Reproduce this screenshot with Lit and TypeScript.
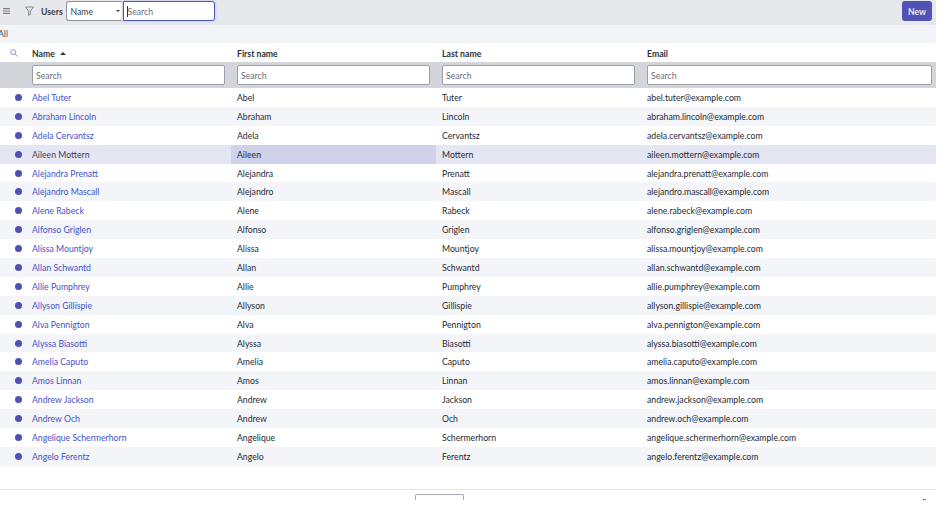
import { LitElement, html, css } from 'lit';
import { customElement } from 'lit/decorators.js';

const users = [
  ['Abel', 'Tuter'],
  ['Abraham', 'Lincoln'],
  ['Adela', 'Cervantsz'],
  ['Aileen', 'Mottern'],
  ['Alejandra', 'Prenatt'],
  ['Alejandro', 'Mascall'],
  ['Alene', 'Rabeck'],
  ['Alfonso', 'Griglen'],
  ['Alissa', 'Mountjoy'],
  ['Allan', 'Schwantd'],
  ['Allie', 'Pumphrey'],
  ['Allyson', 'Gillispie'],
  ['Alva', 'Pennigton'],
  ['Alyssa', 'Biasotti'],
  ['Amelia', 'Caputo'],
  ['Amos', 'Linnan'],
  ['Andrew', 'Jackson'],
  ['Andrew', 'Och'],
  ['Angelique', 'Schermerhorn'],
  ['Angelo', 'Ferentz'],
];

@customElement('app-root')
export class AppRoot extends LitElement {
  static styles = css`
    :host {
      display: block;
      width: 946px;
      height: 514px;
      overflow: hidden;
      background: #fff;
      font-family: 'Lato', sans-serif;
      font-size: 8.7px;
      color: #1f2430;
    }

    .page {
      width: 936px;
    }

    .toolbar {
      display: flex;
      align-items: center;
      height: 25px;
      background: #e6e8ec;
      box-sizing: border-box;
      padding: 0 0 3px 3px;
    }

    .menu-icon {
      width: 7px;
      height: 6px;
      display: block;
    }

    .filter-icon {
      width: 9px;
      height: 10px;
      margin-left: 15px;
      display: block;
    }

    .title {
      font-weight: 700;
      margin-left: 7px;
      width: 24.5px;
      color: #3a3f4b;
    }

    .picker {
      display: flex;
      align-items: center;
      justify-content: space-between;
      box-sizing: border-box;
      width: 57px;
      height: 20px;
      background: #fff;
      border: 1px solid #8d929c;
      border-right: none;
      border-radius: 3px 0 0 3px;
      padding: 0 3px 0 4px;
      color: #3a3f4b;
    }

    .caret {
      width: 0;
      height: 0;
      border-left: 2px solid transparent;
      border-right: 2px solid transparent;
      border-top: 2.5px solid #3a3f4b;
    }

    .focus-input {
      box-sizing: border-box;
      width: 92px;
      height: 20px;
      display: flex;
      align-items: center;
      background: #fff;
      border: 1px solid #4f52c4;
      border-radius: 0 3px 3px 0;
      box-shadow: 0 0 0 1.5px #d5d7f0;
      padding-left: 3px;
      color: #6b707b;
    }

    .cursor {
      width: 1px;
      height: 11px;
      background: #333;
    }

    .new {
      margin-left: auto;
      margin-right: 4px;
      width: 30px;
      height: 20px;
      display: flex;
      align-items: center;
      justify-content: center;
      background: #5152b4;
      color: #e8e9f8;
      font-weight: 700;
      border-radius: 3px;
    }

    .crumb {
      height: 18px;
      background: #f4f5f8;
      line-height: 18px;
      color: #4a4f5a;
      margin-left: -2px;
    }

    .cols {
      display: grid;
      grid-template-columns: 26px 205px 205px 205px 295px;
    }

    .head {
      height: 18px;
      margin-top: 1px;
      align-items: center;
      font-weight: 700;
      color: #2b303b;
    }

    .head > div {
      padding-left: 6px;
    }

    .head .search-cell {
      padding-left: 10px;
    }

    .sort {
      display: inline-block;
      width: 0;
      height: 0;
      margin-left: 5px;
      vertical-align: 2px;
      border-left: 3px solid transparent;
      border-right: 3px solid transparent;
      border-bottom: 3px solid #2b303b;
    }

    .filters {
      height: 26px;
      background: #d3d5da;
      align-items: center;
    }

    .filters input {
      display: block;
      box-sizing: border-box;
      width: 193px;
      height: 20px;
      margin: 0 0 0 6px;
      padding: 0 3px;
      font: inherit;
      color: #3a3f4b;
      background: #fff;
      border: 1px solid #9a9ea8;
      border-radius: 2px;
    }

    .filters input::placeholder {
      color: #6b707b;
      opacity: 1;
    }

    .filters .wide {
      width: 285px;
    }

    .row {
      height: 18.9px;
      align-items: center;
      color: #252a35;
    }

    .row > div {
      height: 100%;
      display: flex;
      align-items: center;
      padding-left: 6px;
      box-sizing: border-box;
    }

    .row:nth-child(even) {
      background: #f4f5f8;
    }

    .row.hover {
      background: #e5e6f3;
    }

    .row.hover .link {
      color: #3a3f60;
    }

    .row .active-cell {
      background: #d0d2ec;
    }

    .row .dot-cell {
      padding-left: 14.5px;
    }

    .dot {
      width: 7px;
      height: 7px;
      border-radius: 50%;
      background: #4f50b4;
    }

    .link {
      color: #4352c8;
    }

    .footer {
      position: relative;
      margin-top: 23px;
      height: 25px;
      border-top: 1px solid #e4e5e8;
      box-sizing: border-box;
    }

    .pager {
      box-sizing: border-box;
      margin: 4px 0 0 415px;
      width: 49px;
      height: 6px;
      background: #fff;
      border: 1px solid #a6aab2;
      border-bottom: none;
      border-radius: 2px 2px 0 0;
    }

    .tick {
      position: absolute;
      right: 10px;
      top: 9px;
      width: 3px;
      height: 1px;
      background: #6b707b;
    }
  `;

  render() {
    return html`
      <div class="page">
        <div class="toolbar">
          <svg class="menu-icon" viewBox="0 0 7 6">
            <path d="M0 .6h7M0 3h7M0 5.4h7" stroke="#7c818c" stroke-width="1.1" fill="none" />
          </svg>
          <svg class="filter-icon" viewBox="0 0 9 10">
            <path d="M.5 1h8L5.4 5v3.4L3.6 9.4V5z" stroke="#5c616c" stroke-width=".7" fill="none" stroke-linejoin="round" />
          </svg>
          <span class="title">Users</span>
          <div class="picker"><span>Name</span><span class="caret"></span></div>
          <div class="focus-input"><span class="cursor"></span><span>Search</span></div>
          <div class="new">New</div>
        </div>
        <div class="crumb">All</div>
        <div class="cols head">
          <div class="search-cell">
            <svg width="8" height="8" viewBox="0 0 8 8" style="display:block">
              <circle cx="3.2" cy="3.2" r="2.5" stroke="#7a7cd0" stroke-width=".8" fill="none" />
              <path d="M5.1 5.1L7.6 7.6" stroke="#7a7cd0" stroke-width=".8" />
            </svg>
          </div>
          <div>Name<span class="sort"></span></div>
          <div>First name</div>
          <div>Last name</div>
          <div>Email</div>
        </div>
        <div class="cols filters">
          <div></div>
          <input placeholder="Search" />
          <input placeholder="Search" />
          <input placeholder="Search" />
          <input class="wide" placeholder="Search" />
        </div>
        <div class="body">
          ${users.map(([first, last], i) => html`
            <div class="cols row ${i === 3 ? 'hover' : ''}">
              <div class="dot-cell"><span class="dot"></span></div>
              <div><span class="link">${first} ${last}</span></div>
              <div class="${i === 3 ? 'active-cell' : ''}">${first}</div>
              <div>${last}</div>
              <div>${first.toLowerCase()}.${last.toLowerCase()}@example.com</div>
            </div>
          `)}
        </div>
        <div class="footer">
          <div class="pager"></div>
          <span class="tick"></span>
        </div>
      </div>
    `;
  }
}
